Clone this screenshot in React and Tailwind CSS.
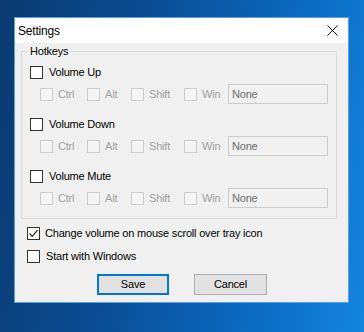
import React from "react";

function Box({ checked, disabled }) {
  return (
    <span
      className={
        disabled
          ? "w-[13px] h-[13px] shrink-0 border border-[#cccccc] bg-[#f4f4f4]"
          : "w-[13px] h-[13px] shrink-0 border border-[#333333] bg-white flex items-center justify-center"
      }
    >
      {checked && (
        <svg width="11" height="11" viewBox="0 0 11 11">
          <path d="M1.5 5.5 L4.2 8.3 L9.6 2.2" fill="none" stroke="#222" strokeWidth="1.2" />
        </svg>
      )}
    </span>
  );
}

function Modifier({ label, width }) {
  return (
    <div className={`flex items-center gap-[5px] ${width}`}>
      <Box disabled />
      <span className="text-[#a0a0a0]">{label}</span>
    </div>
  );
}

function HotkeyBlock({ title }) {
  return (
    <div className="flex flex-col gap-[2px]">
      <div className="h-[20px] flex items-center gap-[6px] pl-[8px]">
        <Box />
        <span>{title}</span>
      </div>
      <div className="h-[20px] flex items-center pl-[18px]">
        <Modifier label="Ctrl" width="w-[47px]" />
        <Modifier label="Alt" width="w-[44px]" />
        <Modifier label="Shift" width="w-[53px]" />
        <Modifier label="Win" width="w-[44px]" />
        <div className="w-[100px] h-[20px] border border-[#cccccc] bg-[#f0f0f0] flex items-center pl-[3px] text-[#6d6d6d]">
          None
        </div>
      </div>
    </div>
  );
}

export default function App() {
  return (
    <div className="w-[364px] h-[332px] overflow-hidden pt-[17px] pl-[14px] bg-[linear-gradient(100deg,#0a3a70_0%,#0b4c92_35%,#0c6cc4_75%,#1585e0_100%)] font-['Liberation_Sans',Arial,sans-serif] text-[11px] tracking-[-0.2px] text-black">
      <div className="w-[335px] h-[286px] border border-[#5a9fe0] bg-[#f0f0f0] flex flex-col">
        <div className="h-[25px] bg-white flex items-center justify-between pl-[3px] pr-[10px] shrink-0">
          <span className="text-[12px]">Settings</span>
          <svg width="11" height="11" viewBox="0 0 11 11">
            <path d="M0.5 0.5 L10.5 10.5 M10.5 0.5 L0.5 10.5" stroke="#111" strokeWidth="1" fill="none" />
          </svg>
        </div>

        <fieldset className="ml-[6px] w-[316px] border border-[#dcdcdc] pb-[10px]">
          <legend className="ml-[6px] px-[2px] leading-[16px]">Hotkeys</legend>
          <div className="pt-[3px] flex flex-col gap-[10px]">
            <HotkeyBlock title="Volume Up" />
            <HotkeyBlock title="Volume Down" />
            <HotkeyBlock title="Volume Mute" />
          </div>
        </fieldset>

        <div className="pl-[12px] mt-[4px] flex flex-col gap-[3px]">
          <div className="h-[20px] flex items-center gap-[5px]">
            <Box checked />
            <span>Change volume on mouse scroll over tray icon</span>
          </div>
          <div className="h-[20px] flex items-center gap-[6px]">
            <Box />
            <span>Start with Windows</span>
          </div>
        </div>

        <div className="mt-[8px] pl-[82px] flex gap-[25px]">
          <button className="w-[72px] h-[21px] border-2 border-[#0078d7] bg-[#e1e1e1] flex items-center justify-center">
            Save
          </button>
          <button className="w-[73px] h-[21px] border border-[#adadad] bg-[#e1e1e1] flex items-center justify-center">
            Cancel
          </button>
        </div>
      </div>
    </div>
  );
}
